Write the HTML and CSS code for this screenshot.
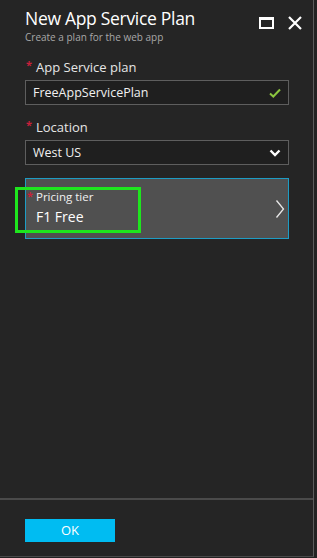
FILE: index.html
```html
<!DOCTYPE html>
<html>
<head lang="en">
    <meta charset="UTF-8">
    <title>New App Service Plan</title>
    <link rel="stylesheet" href="styles.css">
</head>
<body>
<div class="blade">
    <div class="blade-header">
        <div class="blade-titles">
            <div class="blade-title">New App Service Plan</div>
            <div class="blade-subtitle">Create a plan for the web app</div>
        </div>
        <div class="blade-actions">
            <span class="icon-max"></span>
            <svg class="icon-close" width="14" height="14" viewBox="0 0 14 14">
                <path d="M1 1 L13 13 M13 1 L1 13" stroke="#fff" stroke-width="2.2" fill="none"/>
            </svg>
        </div>
    </div>
    <div class="blade-content">
        <div class="field">
            <div class="field-label"><span class="req">*</span>App Service plan</div>
            <div class="input">
                <span>FreeAppServicePlan</span>
                <svg width="12" height="10" viewBox="0 0 12 10">
                    <path d="M1 5.5 L4.3 8.5 L11 1.5" stroke="#8cc63f" stroke-width="2" fill="none"/>
                </svg>
            </div>
        </div>
        <div class="field">
            <div class="field-label"><span class="req">*</span>Location</div>
            <div class="input">
                <span>West US</span>
                <svg width="12" height="8" viewBox="0 0 12 8">
                    <path d="M1.5 1.5 L6 6 L10.5 1.5" stroke="#fff" stroke-width="2.4" fill="none"/>
                </svg>
            </div>
        </div>
        <div class="selector">
            <div class="selector-text">
                <div class="selector-label"><span class="req">*</span>Pricing tier</div>
                <div class="selector-value">F1 Free</div>
            </div>
            <svg width="10" height="20" viewBox="0 0 10 20">
                <path d="M1.5 1.5 L8.5 10 L1.5 18.5" stroke="#e8e8e8" stroke-width="1.3" fill="none"/>
            </svg>
            <div class="highlight"></div>
        </div>
    </div>
    <div class="blade-footer">
        <div class="btn-ok">OK</div>
    </div>
</div>
</body>
</html>
```

FILE: styles.css
```css
html, body{
    margin: 0;
    padding: 0;
    background: #232323;
}
body{
    width: 317px;
    height: 558px;
    font-family: "Open Sans", "Noto Sans", sans-serif;
    color: #fff;
}
.blade{
    width: 313px;
    height: 556px;
    background: #252525;
    border-right: 1px solid #5c5c5c;
    border-bottom: 1px solid #4a4a4a;
    display: flex;
    flex-direction: column;
}
.blade-header{
    display: flex;
    justify-content: space-between;
    padding: 5px 11px 0 25px;
    height: 52px;
    box-sizing: border-box;
}
.blade-title{
    font-size: 17.5px;
    line-height: 26px;
    color: #fff;
    letter-spacing: -0.3px;
}
.blade-subtitle{
    font-size: 10px;
    line-height: 12px;
    color: #a8a8a8;
    margin-top: 0;
}
.blade-actions{
    display: flex;
    align-items: center;
    gap: 14px;
    height: 24px;
    padding-top: 6px;
}
.icon-max{
    display: block;
    width: 11px;
    height: 7px;
    border: 2px solid #fff;
    border-top-width: 3px;
}
.blade-content{
    flex: 1;
    padding: 6px 24px 0 25px;
}
.field{
    margin-bottom: 13px;
}
.field-label{
    font-size: 13px;
    line-height: 18px;
    color: #e6e6e6;
    margin-bottom: 4px;
    position: relative;
    padding-left: 11px;
}
.req{
    position: absolute;
    left: 1px;
    top: -2px;
    color: #c8203a;
    font-size: 11px;
    font-weight: bold;
}
.input{
    height: 23px;
    border: 1px solid #5e5e5e;
    background: #1f1f1f;
    display: flex;
    align-items: center;
    justify-content: space-between;
    padding: 0 7px 0 7px;
    font-size: 12.5px;
    color: #f0f0f0;
}
.selector{
    position: relative;
    margin-top: 12px;
    height: 59px;
    background: #505050;
    border: 1px solid #1e9cc4;
    display: flex;
    align-items: center;
    justify-content: space-between;
    padding: 0 3px 0 10px;
}
.selector-text{
    position: relative;
    padding-bottom: 2px;
}
.selector-label{
    font-size: 11.5px;
    line-height: 16px;
    color: #f0f0f0;
    position: relative;
}
.selector-label .req{
    left: -9px;
    top: -1px;
}
.selector-value{
    font-size: 14px;
    line-height: 20px;
    color: #fff;
    margin-top: 2px;
}
.highlight{
    position: absolute;
    left: -11px;
    top: 8px;
    width: 120px;
    height: 40px;
    border: 3px solid #1ee61e;
}
.blade-footer{
    height: 58px;
    border-top: 2px solid #4a4a4a;
    padding: 19px 0 0 25px;
    box-sizing: border-box;
}
.btn-ok{
    width: 90px;
    height: 23px;
    background: #00bcf2;
    color: #fff;
    font-size: 13px;
    line-height: 23px;
    text-align: center;
}
```
